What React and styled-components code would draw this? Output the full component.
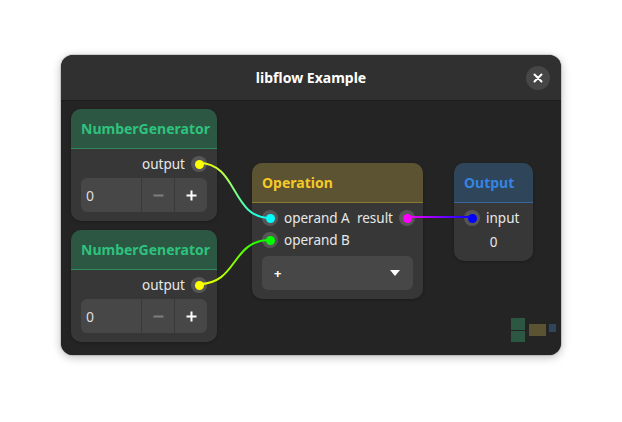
import React from 'react';
import styled, { createGlobalStyle } from 'styled-components';

const GlobalStyle = createGlobalStyle`
  body {
    margin: 0;
    background: #ffffff;
    font-family: "Noto Sans", "Open Sans", sans-serif;
  }
`;

const tones = {
  green: { bg: '#2c5742', line: '#2f8a5c', text: '#2ec27e' },
  yellow: { bg: '#5c5332', line: '#8a7a2e', text: '#f5c926' },
  blue: { bg: '#2f4559', line: '#3a669a', text: '#3584e4' },
};

const Page = styled.div`
  width: 622px;
  height: 422px;
  box-sizing: border-box;
  padding: 55px 61px 0;
`;

const Window = styled.div`
  width: 500px;
  height: 300px;
  border-radius: 12px;
  overflow: hidden;
  display: flex;
  flex-direction: column;
  background: #242424;
  box-shadow: 0 0 0 1px rgba(0, 0, 0, 0.12), 0 2px 10px rgba(0, 0, 0, 0.28);
`;

const HeaderBar = styled.div`
  height: 45px;
  flex: none;
  display: grid;
  grid-template-columns: 1fr auto 1fr;
  align-items: center;
  padding: 0 11px;
  background: #303030;
  border-bottom: 1px solid #1c1c1c;
`;

const Title = styled.div`
  grid-column: 2;
  color: #ffffff;
  font-size: 14px;
  font-weight: 700;
`;

const CloseButton = styled.div`
  justify-self: end;
  width: 24px;
  height: 24px;
  border-radius: 50%;
  background: #464646;
  display: flex;
  align-items: center;
  justify-content: center;
`;

const Canvas = styled.div`
  position: relative;
  flex: 1;
  background: #242424;
`;

const Node = styled.div`
  position: absolute;
  left: ${(p) => p.$x}px;
  top: ${(p) => p.$y}px;
  width: ${(p) => p.$w}px;
  border-radius: 10px;
  overflow: hidden;
  background: #373737;
  box-shadow: 0 1px 3px rgba(0, 0, 0, 0.25);
`;

const NodeHeader = styled.div`
  height: 39px;
  display: flex;
  align-items: center;
  padding: 0 10px;
  background: ${(p) => tones[p.$tone].bg};
  border-bottom: 1px solid ${(p) => tones[p.$tone].line};
  color: ${(p) => tones[p.$tone].text};
  font-size: 14px;
  font-weight: 700;
  white-space: nowrap;
`;

const NodeBody = styled.div`
  display: flex;
  flex-direction: column;
  gap: 4px;
  padding: 5px ${(p) => p.$padRight ?? 10}px 9px 10px;
  color: #e8e8e8;
  font-size: 13.5px;
`;

const PortRow = styled.div`
  height: 20px;
  display: flex;
  align-items: center;
  justify-content: ${(p) => p.$justify || 'flex-start'};
  gap: 6px;
  white-space: nowrap;
`;

const PortGroup = styled.div`
  display: flex;
  flex-direction: column;
  gap: 2px;
  margin-bottom: 2px;
`;

const PushRight = styled.span`
  margin-left: auto;
`;

const Port = styled.span`
  width: 16px;
  height: 16px;
  flex: none;
  border-radius: 50%;
  background: #565656;
  display: flex;
  align-items: center;
  justify-content: center;

  &::after {
    content: '';
    width: 9px;
    height: 9px;
    border-radius: 50%;
    background: ${(p) => p.$color};
  }
`;

const ValueText = styled.div`
  height: 20px;
  display: flex;
  align-items: center;
  justify-content: center;
`;

const SpinBox = styled.div`
  height: 34px;
  display: flex;
  border-radius: 6px;
  overflow: hidden;
  background: #474747;
`;

const SpinEntry = styled.div`
  flex: 1;
  display: flex;
  align-items: center;
  padding-left: 5px;
  color: #dedede;
  font-size: 14px;
`;

const SpinButton = styled.div`
  width: 32px;
  display: flex;
  align-items: center;
  justify-content: center;
  border-left: 1px solid #393939;
  color: ${(p) => (p.$dim ? '#7e7e7e' : '#ffffff')};
`;

const Dropdown = styled.div`
  height: 34px;
  display: flex;
  align-items: center;
  justify-content: space-between;
  margin-right: 2px;
  padding: 0 13px 0 12px;
  border-radius: 6px;
  background: #474747;
  color: #ffffff;
  font-size: 13px;
  font-weight: 700;
`;

const Wires = styled.svg`
  position: absolute;
  left: 0;
  top: 0;
  width: 100%;
  height: 100%;
  pointer-events: none;
`;

const Minimap = styled.svg`
  position: absolute;
  right: 3px;
  bottom: 13px;
`;

const PlusIcon = () => (
  <svg width="11" height="11" viewBox="0 0 11 11">
    <path d="M5.5 0.5v10M0.5 5.5h10" stroke="currentColor" strokeWidth="2" />
  </svg>
);

const MinusIcon = () => (
  <svg width="11" height="11" viewBox="0 0 11 11">
    <path d="M0.5 5.5h10" stroke="currentColor" strokeWidth="2" />
  </svg>
);

const CloseIcon = () => (
  <svg width="10" height="10" viewBox="0 0 10 10">
    <path d="M1.5 1.5l7 7M8.5 1.5l-7 7" stroke="#ffffff" strokeWidth="2" strokeLinecap="round" />
  </svg>
);

const ArrowDown = () => (
  <svg width="10" height="6" viewBox="0 0 10 6">
    <path d="M0 0h10L5 6z" fill="#ffffff" />
  </svg>
);

const NumberGenerator = ({ x, y }) => (
  <Node $x={x} $y={y} $w={146}>
    <NodeHeader $tone="green">NumberGenerator</NodeHeader>
    <NodeBody>
      <PortRow $justify="flex-end">
        output
        <Port $color="#ffff00" />
      </PortRow>
      <SpinBox>
        <SpinEntry>0</SpinEntry>
        <SpinButton $dim>
          <MinusIcon />
        </SpinButton>
        <SpinButton>
          <PlusIcon />
        </SpinButton>
      </SpinBox>
    </NodeBody>
  </Node>
);

const wires = [
  { id: 'a', from: [138, 62], to: [209, 117], c1: '#ffff00', c2: '#00ffff' },
  { id: 'b', from: [138, 183], to: [209, 139], c1: '#ffff00', c2: '#00ff00' },
  { id: 'c', from: [346, 116], to: [411, 116], c1: '#ff00ff', c2: '#0000ff' },
];

const wirePath = ({ from, to }) => {
  const dx = Math.max(30, (to[0] - from[0]) * 0.55);
  return `M${from[0]} ${from[1]} C${from[0] + dx} ${from[1]} ${to[0] - dx} ${to[1]} ${to[0]} ${to[1]}`;
};

const App = () => (
  <>
    <GlobalStyle />
    <Page>
      <Window>
        <HeaderBar>
          <Title>libflow Example</Title>
          <CloseButton>
            <CloseIcon />
          </CloseButton>
        </HeaderBar>
        <Canvas>
          <NumberGenerator x={10} y={8} />
          <NumberGenerator x={10} y={129} />

          <Node $x={191} $y={62} $w={171}>
            <NodeHeader $tone="yellow">Operation</NodeHeader>
            <NodeBody $padRight={8}>
              <PortGroup>
                <PortRow>
                  <Port $color="#00ffff" />
                  operand A
                  <PushRight>result</PushRight>
                  <Port $color="#ff00ff" />
                </PortRow>
                <PortRow>
                  <Port $color="#00ff00" />
                  operand B
                </PortRow>
              </PortGroup>
              <Dropdown>
                +
                <ArrowDown />
              </Dropdown>
            </NodeBody>
          </Node>

          <Node $x={393} $y={62} $w={79}>
            <NodeHeader $tone="blue">Output</NodeHeader>
            <NodeBody>
              <PortRow>
                <Port $color="#0000ff" />
                input
              </PortRow>
              <ValueText>0</ValueText>
            </NodeBody>
          </Node>

          <Wires>
            <defs>
              {wires.map((w) => (
                <linearGradient
                  key={w.id}
                  id={`wire-${w.id}`}
                  gradientUnits="userSpaceOnUse"
                  x1={w.from[0]}
                  y1={w.from[1]}
                  x2={w.to[0]}
                  y2={w.to[1]}
                >
                  <stop offset="0" stopColor={w.c1} />
                  <stop offset="1" stopColor={w.c2} />
                </linearGradient>
              ))}
            </defs>
            {wires.map((w) => (
              <path key={w.id} d={wirePath(w)} fill="none" stroke={`url(#wire-${w.id})`} strokeWidth="2" />
            ))}
          </Wires>

          <Minimap width="47" height="24" viewBox="0 0 47 24">
            <rect x="0" y="0" width="14" height="12" fill="#2c5742" />
            <rect x="0" y="13" width="14" height="11" fill="#2c5742" />
            <rect x="18" y="6" width="17" height="12" fill="#5c5332" />
            <rect x="38" y="6" width="7" height="8" fill="#2f4559" />
          </Minimap>
        </Canvas>
      </Window>
    </Page>
  </>
);

export default App;
